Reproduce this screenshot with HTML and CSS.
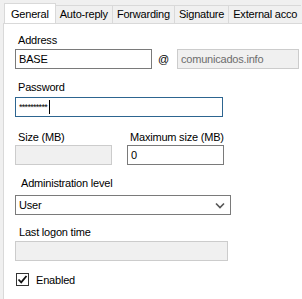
FILE: index.html
```html
<!DOCTYPE html>
<html lang="en">
<head>
    <meta charset="UTF-8">
    <title>Account</title>
    <link rel="stylesheet" href="styles.css">
</head>
<body>

<!-- Tab strip -->
<div class="tabs">
    <div class="tab active">General</div>
    <div class="tab">Auto-reply</div>
    <div class="tab">Forwarding</div>
    <div class="tab">Signature</div>
    <div class="tab last">External acco</div>
</div>

<div class="panel">
    <div class="label address-label">Address</div>
    <div class="address-row">
        <div class="box address">BASE</div>
        <span class="at">@</span>
        <div class="box disabled domain">comunicados.info</div>
    </div>

    <div class="label password-label">Password</div>
    <div class="box focused password">**********<span class="caret"></span></div>

    <div class="size-row">
        <div>
            <div class="label">Size (MB)</div>
            <div class="box disabled size"></div>
        </div>
        <div>
            <div class="label">Maximum size (MB)</div>
            <div class="box size">0</div>
        </div>
    </div>

    <div class="label admin-label">Administration level</div>
    <div class="box select">
        <span>User</span>
        <svg width="10" height="7" viewBox="0 0 10 7"><path d="M1 1.5 L5 5.5 L9 1.5" fill="none" stroke="#555" stroke-width="1.6"/></svg>
    </div>

    <div class="label logon-label">Last logon time</div>
    <div class="box disabled logon"></div>

    <div class="check-row">
        <span class="checkbox">
            <svg width="11" height="11" viewBox="0 0 11 11"><path d="M1.5 5.5 L4.2 8.3 L9.5 2" fill="none" stroke="#111" stroke-width="1.8"/></svg>
        </span>
        <span>Enabled</span>
    </div>
</div>

</body>
</html>
```

FILE: styles.css
```css
/* Page */
html, body {
    overflow: hidden;
}

body {
    margin: 0;
    background-color: #f0f0f0;
    font-family: "Liberation Sans", Arial, sans-serif;
    font-size: 11px;
    letter-spacing: -0.2px;
    color: #000;
    height: 299px;
}

/* Tabs */
.tabs {
    display: flex;
    padding: 3px 0 0 4px;
    height: 20px;
    white-space: nowrap;
    overflow: hidden;
}

.tab {
    margin-top: 2px;
    height: 17px;
    line-height: 17px;
    padding: 0 4px;
    background-color: #f0f0f0;
    border: 1px solid #d9d9d9;
    border-bottom: none;
    margin-left: -1px;
    flex-shrink: 0;
}

.tab.last {
    border-right: none;
}

.tab.active {
    margin-top: 0;
    height: 21px;
    line-height: 20px;
    background-color: #fff;
    position: relative;
    z-index: 1;
    margin-left: 0;
    padding: 0 6px;
}

/* Panel */
.panel {
    background-color: #fff;
    border-top: 1px solid #d9d9d9;
    border-left: 1px solid #d9d9d9;
    margin-left: 3px;
    padding: 9px 0 0 11px;
    height: 266px;
}

.label {
    line-height: 15px;
    padding-left: 3px;
    margin-bottom: 2px;
    white-space: nowrap;
}

.address-label {
    margin-bottom: 1px;
}

.box {
    box-sizing: border-box;
    height: 20px;
    line-height: 18px;
    border: 1px solid #7a7a7a;
    padding-left: 3px;
    background-color: #fff;
}

.box.disabled {
    background-color: #f0f0f0;
    border-color: #cccccc;
    color: #6d6d6d;
}

.box.focused {
    border-color: #2d6590;
}

.address-row {
    display: flex;
    align-items: center;
}

.address {
    width: 137px;
}

.at {
    margin: 0 8px 0 6px;
}

.domain {
    width: 122px;
}

.password-label {
    margin-top: 11px;
}

.password {
    width: 208px;
    font-size: 9px;
    letter-spacing: -0.7px;
    display: flex;
    align-items: center;
}

.caret {
    display: inline-block;
    width: 1px;
    height: 14px;
    background-color: #000;
    margin-left: 2px;
}

.size-row {
    display: grid;
    grid-template-columns: 112px 97px;
    margin-top: 13px;
}

.size-row .label {
    margin-bottom: 0;
}

.size {
    width: 97px;
}

.admin-label {
    margin-top: 11px;
    padding-left: 6px;
    margin-bottom: 4px;
}

.select {
    width: 216px;
    display: flex;
    justify-content: space-between;
    align-items: center;
    padding-right: 5px;
}

.logon-label {
    margin-top: 10px;
    padding-left: 4px;
    margin-bottom: 1px;
}

.logon {
    width: 213px;
}

/* Checkbox */
.check-row {
    display: flex;
    align-items: center;
    margin-top: 12px;
    padding-left: 1px;
}

.checkbox {
    box-sizing: border-box;
    width: 13px;
    height: 13px;
    border: 1px solid #333;
    display: flex;
    align-items: center;
    justify-content: center;
    margin-right: 7px;
}
```
